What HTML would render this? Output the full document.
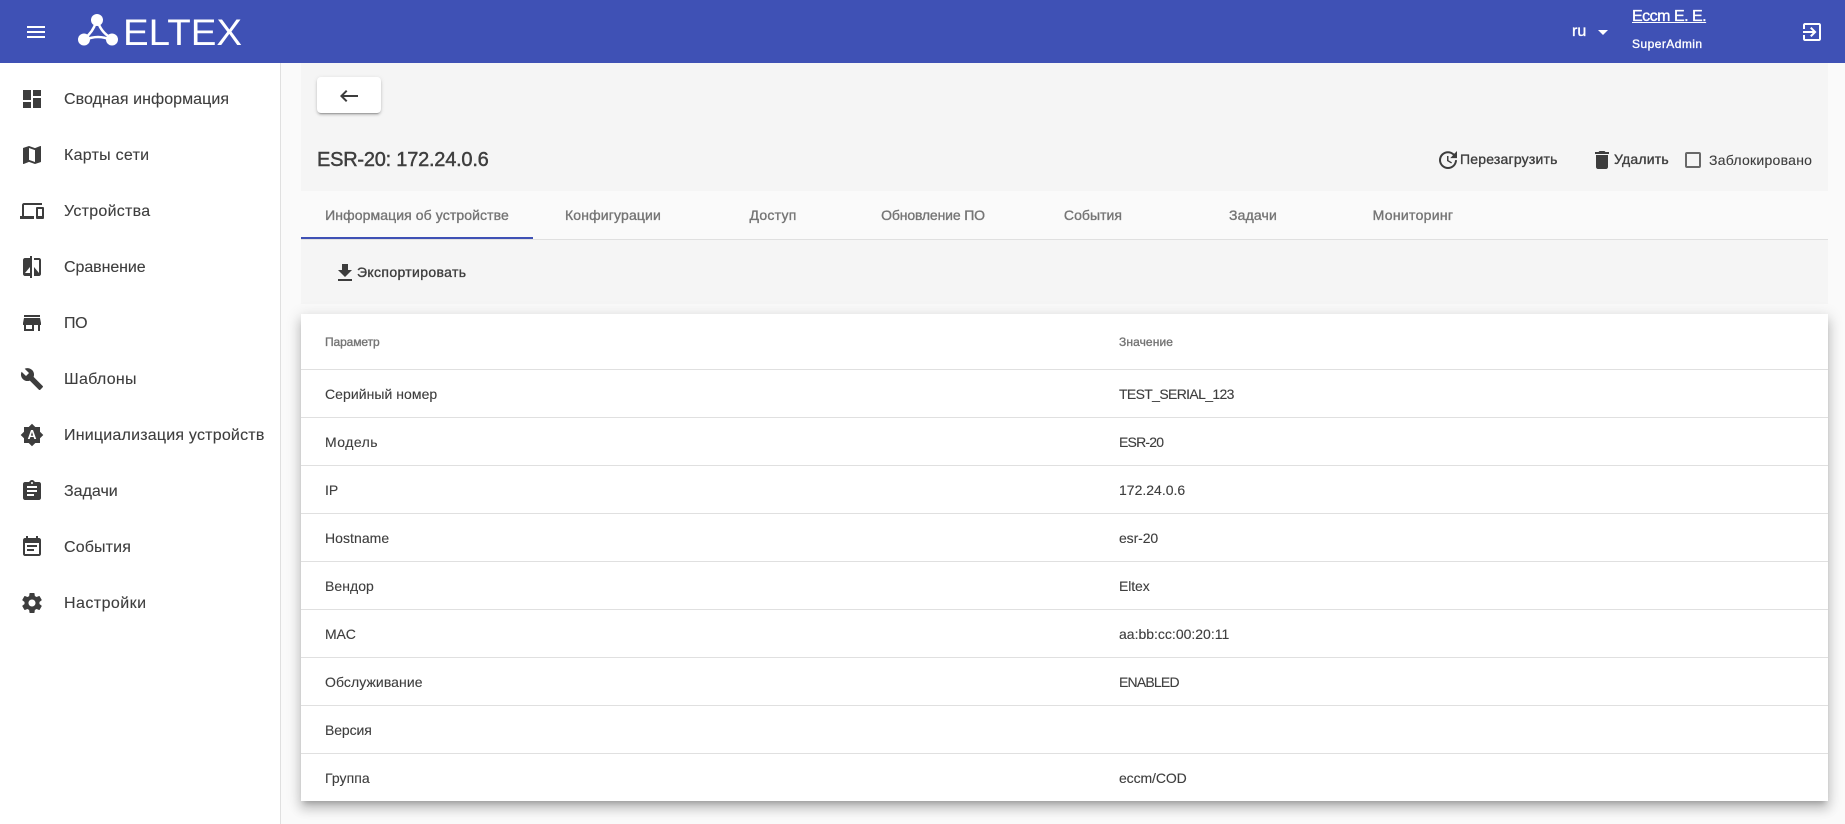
<!DOCTYPE html>
<html lang="ru">
<head>
<meta charset="utf-8">
<title>ESR-20</title>
<style>
html,body{margin:0;padding:0;width:1845px;height:824px;overflow:hidden;background:#fafafa;font-family:"Liberation Sans",sans-serif;color:#3e3e3e}
*{box-sizing:border-box}
.t{position:absolute;white-space:nowrap;line-height:20px;height:20px;-webkit-text-stroke:.12px currentColor}
.t.m{-webkit-text-stroke:.35px currentColor}
svg.i{position:absolute;width:24px;height:24px;fill:#3d3d3d;display:block}
#hdr{position:absolute;left:0;top:0;width:1845px;height:63px;background:#3f51b5}
#hdr svg.i{fill:#fff}
#side{position:absolute;left:0;top:63px;width:281px;height:761px;background:#fff;border-right:1px solid #e0e0e0}
.nav{font-size:16px;left:64px}
.panel{position:absolute;left:301px;width:1527px;background:#f5f5f5}
.tab{font-size:14px;color:#757575;width:160px;text-align:center;top:205px}
#card{position:absolute;left:301px;top:314px;width:1527px;height:487px;background:#fff;box-shadow:0 5px 5px -3px rgba(0,0,0,.2),0 8px 10px 1px rgba(0,0,0,.14),0 3px 14px 2px rgba(0,0,0,.12)}
.ln{position:absolute;left:0;width:1527px;height:1px;background:#e0e0e0}
.c1,.c2{font-size:14px}
.c1{left:325px}.c2{left:1119px}
</style>
</head>
<body>
<div id="hdr">
<svg class="i" style="left:24px;top:20px" viewBox="0 0 24 24"><path d="M3 18h18v-2H3v2zm0-5h18v-2H3v2zm0-7v2h18V6H3z"/></svg>
<svg style="position:absolute;left:70px;top:5px" width="180" height="50" viewBox="0 0 180 50">
<g fill="none" stroke="#fff" stroke-width="2.500"><path d="M26 17Q23 27 15 33"/><path d="M28 17Q31 27 41 33"/><path d="M15 35Q28 29 41 35"/></g>
<circle cx="27" cy="15" r="6" fill="#fff"/><circle cx="14" cy="34.500" r="6" fill="#fff"/><circle cx="42" cy="34.500" r="6" fill="#fff"/>
<text x="53" y="40" font-family="Liberation Sans" font-size="37" fill="#fff" textLength="119" lengthAdjust="spacingAndGlyphs">ELTEX</text>
</svg>
<div class="t m" style="left:1572px;top:22px;font-size:16px;color:#fff">ru</div>
<svg style="position:absolute;left:1598px;top:30px" width="10" height="5" viewBox="0 0 10 5"><path d="M0 0l5 5 5-5z" fill="#fff"/></svg>
<div class="t m" style="left:1632px;top:7px;font-size:16px;color:#fff;letter-spacing:-.5px;text-decoration:underline">Eccm E. E.</div>
<div class="t m" style="left:1632px;top:34px;font-size:12px;color:#fff;letter-spacing:.45px">SuperAdmin</div>
<svg class="i" style="left:1800px;top:20px" viewBox="0 0 24 24"><path d="M10.090 15.590L11.500 17l5-5-5-5-1.410 1.410L12.670 11H3v2h9.670l-2.580 2.590zM19 3H5c-1.110 0-2 .9-2 2v4h2V5h14v14H5v-4H3v4c0 1.100.89 2 2 2h14c1.100 0 2-.9 2-2V5c0-1.100-.9-2-2-2z"/></svg>
</div>

<div id="side"></div>
<svg class="i" style="left:20px;top:87px" viewBox="0 0 24 24"><path d="M3 13h8V3H3v10zm0 8h8v-6H3v6zm10 0h8V11h-8v10zm0-18v6h8V3h-8z"/></svg>
<div class="t nav" style="top:90px;letter-spacing:.06px">Сводная информация</div>
<svg class="i" style="left:20px;top:143px" viewBox="0 0 24 24"><path d="M20.500 3l-.16.03L15 5.100 9 3 3.360 4.900c-.21.07-.36.25-.36.48V20.500c0 .28.22.5.5.5l.16-.03L9 18.900l6 2.100 5.640-1.900c.21-.07.36-.25.36-.48V3.500c0-.28-.22-.5-.5-.5zM15 19l-6-2.110V5l6 2.110V19z"/></svg>
<div class="t nav" style="top:146px;letter-spacing:.27px">Карты сети</div>
<svg class="i" style="left:20px;top:199px" viewBox="0 0 24 24"><path d="M4 6h18V4H4c-1.100 0-2 .9-2 2v11H0v3h14v-3H4V6zm19 2h-6c-.55 0-1 .45-1 1v10c0 .55.45 1 1 1h6c.55 0 1-.45 1-1V9c0-.55-.45-1-1-1zm-1 9h-4v-7h4v7z"/></svg>
<div class="t nav" style="top:202px;letter-spacing:.27px">Устройства</div>
<svg class="i" style="left:20px;top:255px" viewBox="0 0 24 24"><path d="M10 3H5c-1.100 0-2 .9-2 2v14c0 1.100.9 2 2 2h5v2h2V1h-2v2zm0 15H5l5-6v6zm9-15h-5v2h5v13l-5-6v9h5c1.100 0 2-.9 2-2V5c0-1.100-.9-2-2-2z"/></svg>
<div class="t nav" style="top:258px;letter-spacing:-.07px">Сравнение</div>
<svg class="i" style="left:20px;top:311px" viewBox="0 0 24 24"><path d="M20 4H4v2h16V4zm1 10v-2l-1-5H4l-1 5v2h1v6h10v-6h4v6h2v-6h1zm-9 4H6v-4h6v4z"/></svg>
<div class="t nav" style="top:314px;letter-spacing:-.4px">ПО</div>
<svg class="i" style="left:20px;top:367px" viewBox="0 0 24 24"><path d="M22.700 19l-9.100-9.100c.9-2.300.4-5-1.500-6.900-2-2-5-2.400-7.400-1.300L9 6 6 9 1.600 4.700C.4 7.100.9 10.100 2.900 12.100c1.900 1.900 4.600 2.400 6.900 1.500l9.100 9.100c.4.4 1 .4 1.400 0l2.300-2.300c.5-.4.5-1.100.1-1.400z"/></svg>
<div class="t nav" style="top:370px;letter-spacing:.3px">Шаблоны</div>
<svg class="i" style="left:20px;top:423px" viewBox="0 0 24 24"><path d="M10.850 12.650h2.300L12 9l-1.150 3.650zM20 8.690V4h-4.690L12 .69 8.690 4H4v4.690L.69 12 4 15.310V20h4.690L12 23.310 15.310 20H20v-4.690L23.310 12 20 8.690zM14.300 16l-.7-2h-3.200l-.7 2H7.800L11 7h2l3.200 9h-1.900z"/></svg>
<div class="t nav" style="top:426px;letter-spacing:.21px">Инициализация устройств</div>
<svg class="i" style="left:20px;top:479px" viewBox="0 0 24 24"><path d="M19 3h-4.180C14.400 1.840 13.300 1 12 1c-1.300 0-2.400.84-2.820 2H5c-1.100 0-2 .9-2 2v14c0 1.100.9 2 2 2h14c1.100 0 2-.9 2-2V5c0-1.100-.9-2-2-2zm-7 0c.55 0 1 .45 1 1s-.45 1-1 1-1-.45-1-1 .45-1 1-1zm2 14H7v-2h7v2zm3-4H7v-2h10v2zm0-4H7V7h10v2z"/></svg>
<div class="t nav" style="top:482px;letter-spacing:0">Задачи</div>
<svg class="i" style="left:20px;top:535px" viewBox="0 0 24 24"><path d="M17 10H7v2h10v-2zm2-7h-1V1h-2v2H8V1H6v2H5c-1.110 0-1.990.9-1.990 2L3 19c0 1.100.89 2 2 2h14c1.100 0 2-.9 2-2V5c0-1.100-.9-2-2-2zm0 16H5V8h14v11zm-5-5H7v2h7v-2z"/></svg>
<div class="t nav" style="top:538px;letter-spacing:.14px">События</div>
<svg class="i" style="left:20px;top:591px" viewBox="0 0 24 24"><path d="M19.430 12.980c.04-.32.07-.64.07-.98s-.03-.66-.07-.98l2.110-1.650c.19-.15.24-.42.12-.64l-2-3.460c-.12-.22-.39-.3-.61-.22l-2.490 1c-.52-.4-1.080-.73-1.690-.98l-.38-2.650C14.460 2.180 14.250 2 14 2h-4c-.25 0-.46.18-.49.42l-.38 2.650c-.61.25-1.170.59-1.690.98l-2.490-1c-.23-.09-.49 0-.61.22l-2 3.460c-.13.22-.07.49.12.64l2.110 1.650c-.04.32-.07.65-.07.98s.03.66.07.98l-2.110 1.650c-.19.15-.24.42-.12.64l2 3.460c.12.22.39.3.61.22l2.490-1c.52.4 1.080.73 1.690.98l.38 2.650c.03.24.24.42.49.42h4c.25 0 .46-.18.49-.42l.38-2.650c.61-.25 1.170-.59 1.690-.98l2.490 1c.23.09.49 0 .61-.22l2-3.460c.12-.22.07-.49-.12-.64l-2.110-1.650zM12 15.500c-1.930 0-3.500-1.570-3.500-3.500s1.570-3.500 3.500-3.500 3.500 1.570 3.500 3.500-1.570 3.500-3.500 3.500z"/></svg>
<div class="t nav" style="top:594px;letter-spacing:.45px">Настройки</div>

<div class="panel" style="top:63px;height:128px"></div>
<div class="panel" style="top:240px;height:64px"></div>

<div style="position:absolute;left:317px;top:77px;width:64px;height:36px;background:#fff;border-radius:4px;box-shadow:0 3px 1px -2px rgba(0,0,0,.2),0 2px 2px 0 rgba(0,0,0,.14),0 1px 5px 0 rgba(0,0,0,.12)"></div>
<svg class="i" style="left:337px;top:84px" viewBox="0 0 24 24"><path d="M21 11H6.830l3.580-3.590L9 6l-6 6 6 6 1.410-1.410L6.830 13H21v-2z"/></svg>

<div class="t m" style="left:317px;top:150px;font-size:20px;letter-spacing:-.23px;-webkit-text-stroke:.45px currentColor">ESR-20: 172.24.0.6</div>

<svg class="i" style="left:1436px;top:148px" viewBox="0 0 24 24"><path d="M21 10.120h-6.780l2.740-2.820c-2.730-2.700-7.150-2.800-9.880-.1-2.730 2.710-2.730 7.080 0 9.790s7.150 2.710 9.880 0C18.320 15.650 19 14.080 19 12.100h2c0 1.980-.88 4.550-2.640 6.290-3.510 3.480-9.210 3.480-12.720 0-3.500-3.470-3.530-9.110-.02-12.580s9.140-3.470 12.650 0L21 3v7.120zM12.500 8v4.250l3.500 2.080-.72 1.210L11 13V8h1.500z"/></svg>
<div class="t m" style="left:1460px;top:149px;font-size:14px;letter-spacing:.2px">Перезагрузить</div>
<svg class="i" style="left:1590px;top:148px" viewBox="0 0 24 24"><path d="M6 19c0 1.100.9 2 2 2h8c1.100 0 2-.9 2-2V7H6v12zM19 4h-3.500l-1-1h-5l-1 1H5v2h14V4z"/></svg>
<div class="t m" style="left:1614px;top:149px;font-size:14px;letter-spacing:.2px">Удалить</div>
<div style="position:absolute;left:1685px;top:152px;width:16px;height:16px;border:2px solid #696969;border-radius:2px"></div>
<div class="t" style="left:1709px;top:150px;font-size:14px;letter-spacing:.26px">Заблокировано</div>

<div style="position:absolute;left:301px;top:239px;width:1527px;height:1px;background:#e0e0e0"></div>
<div style="position:absolute;left:301px;top:237px;width:232px;height:2px;background:#3f51b5"></div>
<div class="t tab m" style="left:301px;width:232px;letter-spacing:.1px">Информация об устройстве</div>
<div class="t tab m" style="left:533px;letter-spacing:.15px">Конфигурации</div>
<div class="t tab m" style="left:693px;letter-spacing:.25px">Доступ</div>
<div class="t tab m" style="left:853px;letter-spacing:-.15px">Обновление ПО</div>
<div class="t tab m" style="left:1013px;letter-spacing:.05px">События</div>
<div class="t tab m" style="left:1173px;letter-spacing:.15px">Задачи</div>
<div class="t tab m" style="left:1333px;letter-spacing:.3px">Мониторинг</div>

<svg class="i" style="left:333px;top:261px" viewBox="0 0 24 24"><path d="M19 9h-4V3H9v6H5l7 7 7-7zM5 18v2h14v-2H5z"/></svg>
<div class="t m" style="left:357px;top:262px;font-size:14px;letter-spacing:.35px">Экспортировать</div>

<div id="card">
<div class="ln" style="top:55px"></div>
<div class="ln" style="top:103px"></div>
<div class="ln" style="top:151px"></div>
<div class="ln" style="top:199px"></div>
<div class="ln" style="top:247px"></div>
<div class="ln" style="top:295px"></div>
<div class="ln" style="top:343px"></div>
<div class="ln" style="top:391px"></div>
<div class="ln" style="top:439px"></div>
</div>
<div class="t m" style="left:325px;top:332px;font-size:12px;color:#757575;letter-spacing:-.1px">Параметр</div>
<div class="t m" style="left:1119px;top:332px;font-size:12px;color:#757575;letter-spacing:.1px">Значение</div>
<div class="t c1" style="top:384px;letter-spacing:.05px">Серийный номер</div><div class="t c2" style="top:384px;letter-spacing:-.65px">TEST_SERIAL_123</div>
<div class="t c1" style="top:432px;letter-spacing:.45px">Модель</div><div class="t c2" style="top:432px;letter-spacing:-.8px">ESR-20</div>
<div class="t c1" style="top:480px">IP</div><div class="t c2" style="top:480px;letter-spacing:0">172.24.0.6</div>
<div class="t c1" style="top:528px;letter-spacing:.05px">Hostname</div><div class="t c2" style="top:528px;letter-spacing:-.1px">esr-20</div>
<div class="t c1" style="top:576px;letter-spacing:.05px">Вендор</div><div class="t c2" style="top:576px;letter-spacing:-.1px">Eltex</div>
<div class="t c1" style="top:624px;letter-spacing:-.1px">MAC</div><div class="t c2" style="top:624px;letter-spacing:0">aa:bb:cc:00:20:11</div>
<div class="t c1" style="top:672px;letter-spacing:.08px">Обслуживание</div><div class="t c2" style="top:672px;letter-spacing:-.8px">ENABLED</div>
<div class="t c1" style="top:720px;letter-spacing:-.1px">Версия</div>
<div class="t c1" style="top:768px;letter-spacing:.05px">Группа</div><div class="t c2" style="top:768px;letter-spacing:-.1px">eccm/COD</div>
</body>
</html>
